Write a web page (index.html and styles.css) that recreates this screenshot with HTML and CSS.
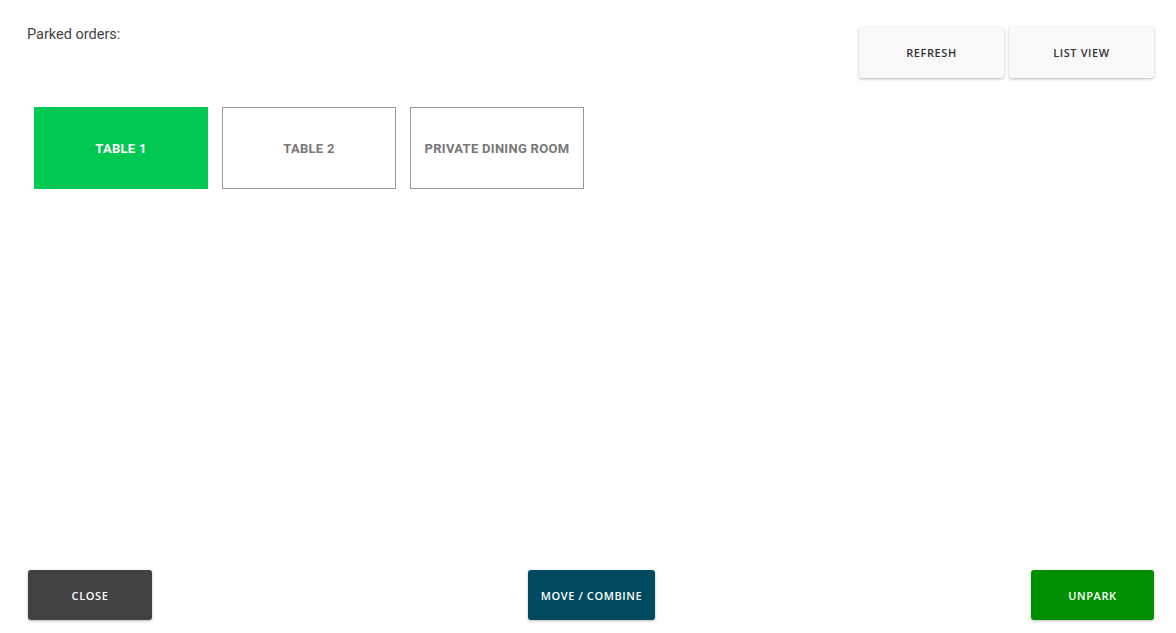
FILE: index.html
```html
<!DOCTYPE html>
<html>
<head>
    <title>Parked Orders</title>
    <link rel="stylesheet" href="styles.css">
</head>
<body>
    <div class="header">
        <div class="title">Parked orders:</div>
        <div class="tools">
            <button class="btn btn-light">REFRESH</button>
            <button class="btn btn-light">LIST VIEW</button>
        </div>
    </div>

    <div class="tables">
        <div class="table active">TABLE 1</div>
        <div class="table">TABLE 2</div>
        <div class="table">PRIVATE DINING ROOM</div>
    </div>

    <div class="footer">
        <button class="btn btn-dark">CLOSE</button>
        <button class="btn btn-teal">MOVE / COMBINE</button>
        <button class="btn btn-green">UNPARK</button>
    </div>
</body>
</html>
```

FILE: styles.css
```css
html, body { height: 100%; }
body { margin: 0; display: flex; flex-direction: column; font-family: Roboto, "Liberation Sans", sans-serif; background: #fff; color: #444; }

.header { display: flex; justify-content: space-between; align-items: flex-start; padding: 27px 22px 0 27px; }
.title { font-size: 14.5px; line-height: 16px; color: #444; }
.tools { display: flex; gap: 5px; }

.btn { font-family: "Open Sans", Lato, sans-serif; font-weight: 600; font-size: 11px; letter-spacing: 0.6px; border: none; border-radius: 3px; cursor: pointer; height: 51px; padding: 0; box-shadow: 0 1px 3px rgba(0,0,0,0.28); }
.btn-light { width: 145px; background: #f9f9f9; color: #333; }
.btn-dark { width: 124px; background: #424143; color: #fff; }
.btn-teal { width: 127px; background: #00495e; color: #fff; }
.btn-green { width: 123px; background: #008f00; color: #fff; }

.tables { display: flex; gap: 14px; padding: 29px 0 0 34px; }
.table { width: 172px; height: 80px; border: 1px solid #999; display: flex; align-items: center; justify-content: center; box-sizing: content-box; font-size: 13px; font-weight: 700; letter-spacing: 0.3px; color: #777; }
.table.active { background: #00c853; border-color: #00c853; color: #fff; }

.footer { margin-top: auto; display: flex; justify-content: space-between; padding: 0 22px 13px 28px; }
.footer .btn { height: 50px; }
```
